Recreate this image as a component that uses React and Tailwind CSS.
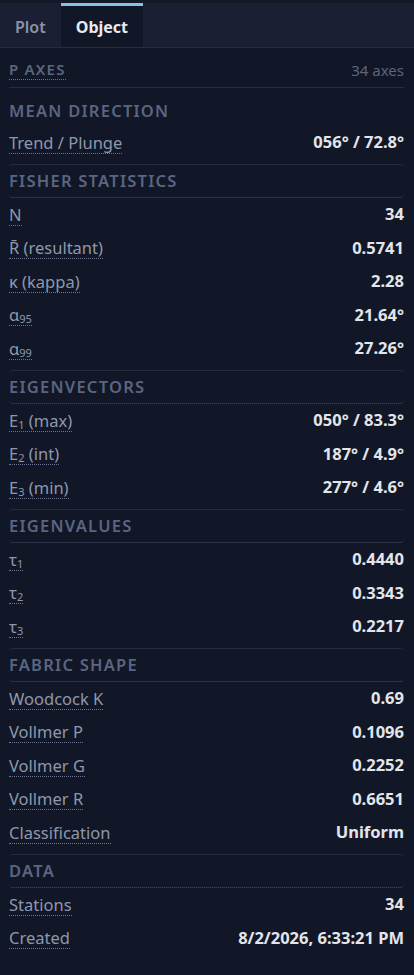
import React from 'react';

const sections = [
  {
    title: 'Mean Direction',
    plain: true,
    rows: [['Trend / Plunge', '056° / 72.8°']],
  },
  {
    title: 'Fisher Statistics',
    rows: [
      ['N', '34'],
      ['R\u0304 (resultant)', '0.5741'],
      ['κ (kappa)', '2.28'],
      [['α', '95'], '21.64°'],
      [['α', '99'], '27.26°'],
    ],
  },
  {
    title: 'Eigenvectors',
    rows: [
      [['E', '1', ' (max)'], '050° / 83.3°'],
      [['E', '2', ' (int)'], '187° / 4.9°'],
      [['E', '3', ' (min)'], '277° / 4.6°'],
    ],
  },
  {
    title: 'Eigenvalues',
    rows: [
      [['τ', '1'], '0.4440'],
      [['τ', '2'], '0.3343'],
      [['τ', '3'], '0.2217'],
    ],
  },
  {
    title: 'Fabric Shape',
    rows: [
      ['Woodcock K', '0.69'],
      ['Vollmer P', '0.1096'],
      ['Vollmer G', '0.2252'],
      ['Vollmer R', '0.6651'],
      ['Classification', 'Uniform'],
    ],
  },
  {
    title: 'Data',
    rows: [
      ['Stations', '34'],
      ['Created', '8/2/2026, 6:33:21 PM'],
    ],
  },
];

function Label({ label }) {
  if (typeof label === 'string') return label;
  const [base, sub, rest] = label;
  return (
    <>
      {base}
      <sub className="bottom-[-2px] text-[11px]">{sub}</sub>
      {rest}
    </>
  );
}

function Row({ label, value }) {
  return (
    <div className="flex h-[33.5px] items-center justify-between">
      <span className="border-b border-dotted border-[#6b7591] text-[16.5px] leading-[21px] text-[#8e97ad]">
        <Label label={label} />
      </span>
      <span className="text-[16.5px] font-bold text-[#e3e5eb]">{value}</span>
    </div>
  );
}

function Section({ title, rows, plain }) {
  return (
    <div className="mb-[4.5px]">
      <div
        className={
          plain
            ? 'flex h-[38px] items-center pt-[8px]'
            : 'flex h-[34px] items-center rounded-[4px] border-t border-b border-t-[#252c3d] border-b-[#4a5268] [border-bottom-style:dotted]'
        }
      >
        <span className="text-[16.5px] font-semibold uppercase tracking-[0.075em] text-[#5b6581]">
          {title}
        </span>
      </div>
      {rows.map(([label, value], i) => (
        <Row key={i} label={label} value={value} />
      ))}
    </div>
  );
}

export default function App() {
  return (
    <div
      className="min-h-[975px] bg-[#111726] text-[16px]"
      style={{ fontFamily: '"Noto Sans", "Open Sans", sans-serif' }}
    >
      <div className="h-[3px] bg-[#151a28]" />
      <div className="flex h-[45px] border-b border-[#272d3e] bg-[#1a1f33]">
        <button className="px-[15px] pt-[3px] text-[16px] font-semibold text-[#8a93a9]">
          Plot
        </button>
        <button className="border-t-[3px] border-[#85c4ea] bg-[#111726] px-[15px] text-[16px] font-bold text-[#e8eaf0]">
          Object
        </button>
      </div>
      <div className="pl-[9px] pr-[10px]">
        <div className="flex h-[40px] items-center justify-between border-b border-[#252c3d] pt-[5px]">
          <span className="border-b border-dotted border-[#6b7591] text-[15px] font-semibold uppercase leading-[19px] tracking-[0.08em] text-[#5b6581]">
            P Axes
          </span>
          <span className="text-[15px] text-[#5b6581]">34 axes</span>
        </div>
        {sections.map((s) => (
          <Section key={s.title} {...s} />
        ))}
      </div>
    </div>
  );
}
